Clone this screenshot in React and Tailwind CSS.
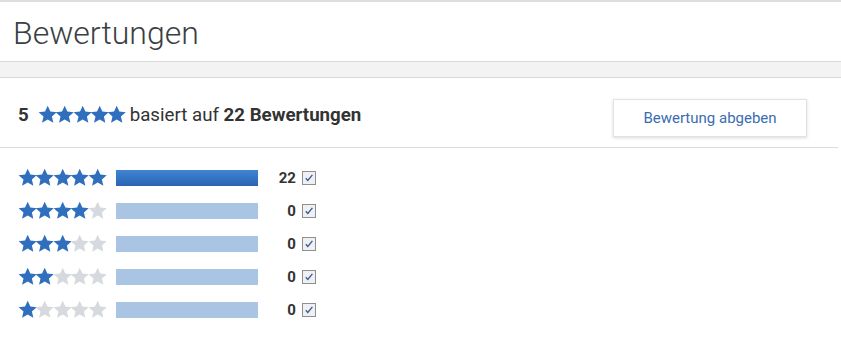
import React from 'react';

const Star = ({ filled }) => (
  <svg viewBox="0 0 24 24" className="w-[19.4px] h-[19.4px] -mx-[1px] shrink-0">
    <path
      d="M12 0.8l3.3 7.3 7.9.8-6 5.3 1.8 7.8L12 18l-7 4 1.8-7.8-6-5.3 7.9-.8z"
      fill={filled ? '#2f6fbd' : '#d6d9dd'}
    />
  </svg>
);

// stars overlap a little, so the row keeps a net width of ~87px
const Stars = ({ count }) => (
  <div className="flex items-center ml-[1px] -mr-[1px]">
    {[1, 2, 3, 4, 5].map(i => <Star key={i} filled={i <= count} />)}
  </div>
);

const CheckBox = () => (
  <span className="w-[14px] h-[14px] border border-[#8f8f8f] bg-[#eef0f4] flex items-center justify-center">
    <svg viewBox="0 0 10 10" className="w-[10px] h-[10px]">
      <path d="M1.8 5.2l2 2.2L8.4 1.8" fill="none" stroke="#3b5a92" strokeWidth="1.3" />
    </svg>
  </span>
);

const rows = [
  { stars: 5, count: 22 },
  { stars: 4, count: 0 },
  { stars: 3, count: 0 },
  { stars: 2, count: 0 },
  { stars: 1, count: 0 },
];

export default function App() {
  return (
    <div className="w-[841px] h-[343px] bg-white text-[#333] font-['Roboto',sans-serif] border-t-2 border-[#dedede]">
      <div className="h-[59px] flex items-center px-[13px] pt-[2px]">
        <h1 className="text-[32px] font-light text-[#3a3f45] leading-none">Bewertungen</h1>
      </div>
      <div className="h-[17px] bg-[#f3f3f3] border-y border-[#d9d9d9]" />
      <div className="mr-[3px] h-[70px] border-b border-[#dcdcdc] flex items-start justify-between pl-[18px] pr-[31px]">
        <div className="flex items-center text-[18.7px] h-[24px] mt-[25px]">
          <span className="font-bold mr-[9px]">5</span>
          <Stars count={5} />
          <span className="ml-[5px]">basiert auf <b>22 Bewertungen</b></span>
        </div>
        <button className="mt-[21px] w-[194px] h-[38px] bg-white border border-[#e2e2e2] shadow-[0_1px_3px_rgba(0,0,0,0.15)] text-[15px] text-[#3a6cb1]">
          Bewertung abgeben
        </button>
      </div>
      <div className="pl-[18px] pt-[22px] flex flex-col gap-[17px]">
        {rows.map(r => (
          <div key={r.stars} className="flex items-center h-[16px]">
            <Stars count={r.stars} />
            <div
              className={
                r.count > 0
                  ? 'ml-[11px] w-[142px] h-[16px] bg-gradient-to-b from-[#3f84d3] to-[#2a65b3]'
                  : 'ml-[11px] w-[142px] h-[16px] bg-[#aac4e3]'
              }
            />
            <span className="w-[38px] text-right text-[15px] font-bold">{r.count}</span>
            <span className="ml-[6px]"><CheckBox /></span>
          </div>
        ))}
      </div>
    </div>
  );
}
